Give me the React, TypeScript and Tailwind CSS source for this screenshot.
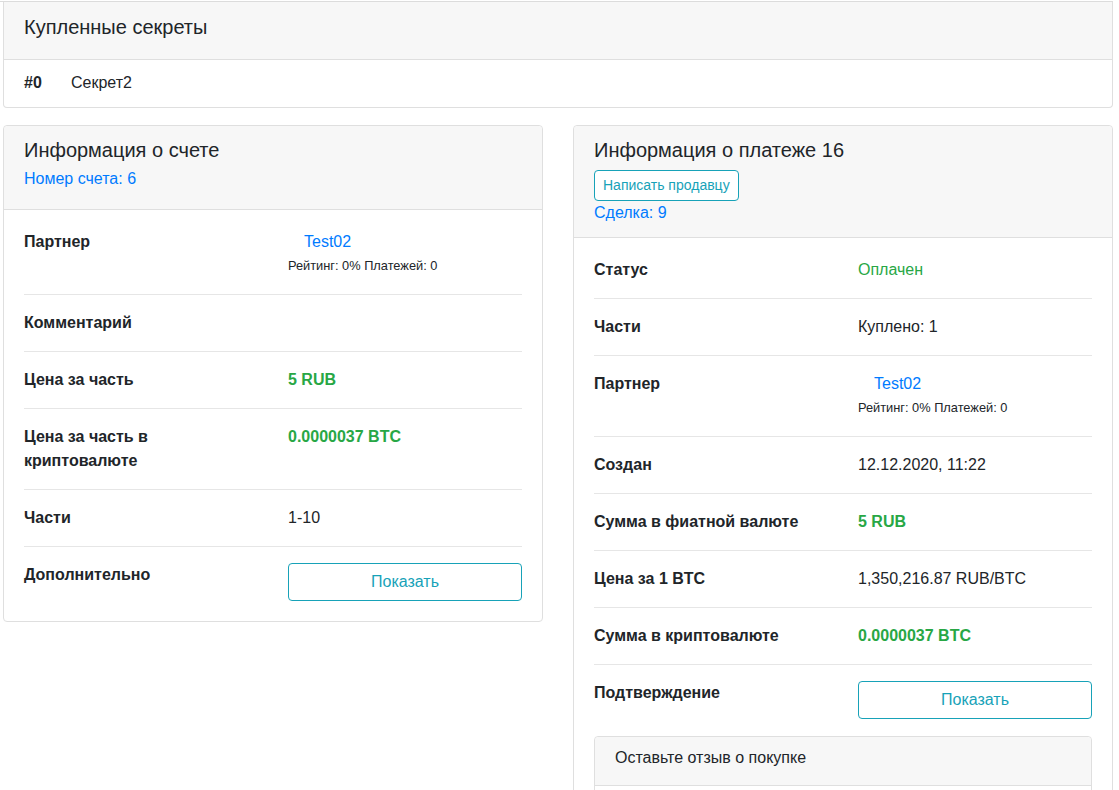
import type { ReactNode } from 'react'

type Row = { label: ReactNode; value: ReactNode }

const font = { fontFamily: '"Liberation Sans", Arial, sans-serif' }

function Partner() {
  return (
    <div>
      <div className="pl-4 text-[#007bff]">Test02</div>
      <div className="text-[12.8px]">Рейтинг: 0% Платежей: 0</div>
    </div>
  )
}

function ShowButton() {
  return (
    <button className="w-full h-[38px] rounded border border-[#17a2b8] text-[#17a2b8] text-base bg-white">
      Показать
    </button>
  )
}

function Rows({ rows }: { rows: Row[] }) {
  return (
    <div>
      {rows.map((r, i) => (
        <div key={i}>
          {i > 0 && <hr className="my-4 border-0 border-t border-[#e6e6e6]" />}
          <div className="grid grid-cols-2 gap-[30px] leading-6">
            <div className="font-bold">{r.label}</div>
            <div>{r.value}</div>
          </div>
        </div>
      ))}
    </div>
  )
}

const accountRows: Row[] = [
  { label: 'Партнер', value: <Partner /> },
  { label: 'Комментарий', value: null },
  { label: 'Цена за часть', value: <span className="font-bold text-[#28a745]">5 RUB</span> },
  {
    label: <>Цена за часть в<br />криптовалюте</>,
    value: <span className="font-bold text-[#28a745]">0.0000037 BTC</span>,
  },
  { label: 'Части', value: '1-10' },
  { label: 'Дополнительно', value: <ShowButton /> },
]

const paymentRows: Row[] = [
  { label: 'Статус', value: <span className="text-[#28a745]">Оплачен</span> },
  { label: 'Части', value: 'Куплено: 1' },
  { label: 'Партнер', value: <Partner /> },
  { label: 'Создан', value: '12.12.2020, 11:22' },
  { label: 'Сумма в фиатной валюте', value: <span className="font-bold text-[#28a745]">5 RUB</span> },
  { label: 'Цена за 1 BTC', value: '1,350,216.87 RUB/BTC' },
  { label: 'Сумма в криптовалюте', value: <span className="font-bold text-[#28a745]">0.0000037 BTC</span> },
  { label: 'Подтверждение', value: <ShowButton /> },
]

export default function App() {
  return (
    <div className="min-h-[790px] bg-white text-base text-[#212529] overflow-hidden" style={font}>
      <div className="mt-[1px] h-[1px] w-[1113px] bg-[#dcdcdc]" />
      <div className="ml-[3px] w-[1110px]">
        <div className="border border-t-0 border-[#dfdfdf] rounded-b">
          <div className="bg-[#f7f7f7] border-b border-[#dfdfdf] px-5 pt-[13px] pb-[20px] text-xl leading-6">
            Купленные секреты
          </div>
          <div className="px-5 pt-[11px] pb-[12px] leading-6 flex">
            <span className="font-bold w-[47px]">#0</span>
            <span>Секрет2</span>
          </div>
        </div>

        <div className="mt-[17px] grid grid-cols-2 gap-[30px] items-start">
          <div className="border border-[#dfdfdf] rounded">
            <div className="bg-[#f7f7f7] border-b border-[#dfdfdf] rounded-t px-5 pt-3 pb-[18px]">
              <div className="text-xl leading-6 mb-[5px]">Информация о счете</div>
              <div className="text-[#007bff] leading-6">Номер счета: 6</div>
            </div>
            <div className="p-5">
              <Rows rows={accountRows} />
            </div>
          </div>

          <div className="border border-[#dfdfdf] rounded h-[700px]">
            <div className="bg-[#f7f7f7] border-b border-[#dfdfdf] rounded-t px-5 pt-3 pb-3">
              <div className="text-xl leading-6 mb-2">Информация о платеже 16</div>
              <button className="h-[31px] px-2 rounded border border-[#17a2b8] text-[#17a2b8] text-sm leading-[21px] bg-white">
                Написать продавцу
              </button>
              <div className="text-[#007bff] leading-6">Сделка: 9</div>
            </div>
            <div className="px-5 pt-5">
              <Rows rows={paymentRows} />
              <div className="mt-[17px] border border-[#dfdfdf] rounded">
                <div className="bg-[#f7f7f7] border-b border-[#dfdfdf] rounded-t px-5 pt-[9px] pb-[15px] leading-6">
                  Оставьте отзыв о покупке
                </div>
                <div className="h-[80px]" />
              </div>
            </div>
          </div>
        </div>
      </div>
    </div>
  )
}
